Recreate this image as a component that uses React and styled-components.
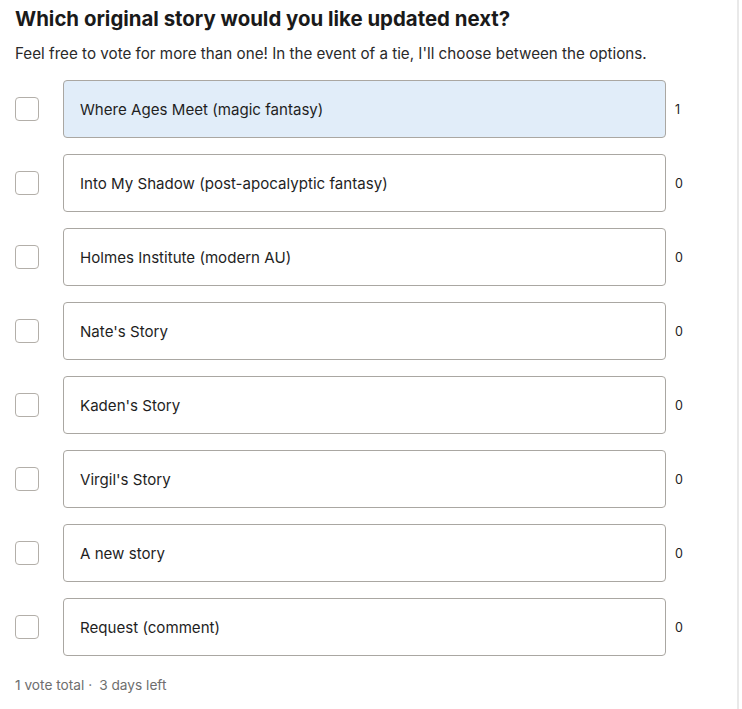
import React from 'react'
import styled, { createGlobalStyle } from 'styled-components'

//Base page styles
const GlobalStyle = createGlobalStyle`
  html, body {
    margin: 0;
    padding: 0;
    background: #ffffff;
  }
  body {
    font-family: Inter, "Noto Sans", "Liberation Sans", sans-serif;
    color: #1f1f1f;
  }
`

const Page = styled.div`
  box-sizing: border-box;
  width: 739px;
  min-height: 100vh;
  padding: 6px 0 0 15px;
  border-right: 2px solid #e9e9e9;
`

const Title = styled.h2`
  margin: 0;
  font-size: 20.4px;
  line-height: 26px;
  font-weight: 700;
  color: #1a1a1a;
`

const Subtitle = styled.p`
  margin: 11px 0 0;
  font-size: 15.2px;
  line-height: 22px;
  color: #2a2a2a;
`

const Options = styled.ul`
  list-style: none;
  margin: 15px 0 0;
  padding: 0;
  display: flex;
  flex-direction: column;
  gap: 16px;
`

const Row = styled.li`
  display: flex;
  align-items: center;
`

const Check = styled.span`
  box-sizing: border-box;
  width: 24px;
  height: 24px;
  border: 1px solid #b3afa9;
  border-radius: 4px;
  flex-shrink: 0;
`

const Choice = styled.div`
  box-sizing: border-box;
  margin-left: 24px;
  width: 603px;
  height: 58px;
  display: flex;
  align-items: center;
  padding: 0 16px;
  border: 1px solid #aaa7a2;
  border-radius: 4px;
  background: ${p => (p.$voted ? '#e1edf9' : '#ffffff')};
  font-size: 15.1px;
  color: #1f1f1f;
`

const Count = styled.span`
  margin-left: 9px;
  font-size: 12.5px;
  color: #222;
`

const Footer = styled.div`
  margin-top: 21px;
  font-size: 13.7px;
  color: #6e6e6e;
  display: flex;
  gap: 7px;
`

const options = [
  { label: 'Where Ages Meet (magic fantasy)', votes: 1 },
  { label: 'Into My Shadow (post-apocalyptic fantasy)', votes: 0 },
  { label: 'Holmes Institute (modern AU)', votes: 0 },
  { label: "Nate's Story", votes: 0 },
  { label: "Kaden's Story", votes: 0 },
  { label: "Virgil's Story", votes: 0 },
  { label: 'A new story', votes: 0 },
  { label: 'Request (comment)', votes: 0 },
]

function App() {
  return (
    <React.Fragment>
      <GlobalStyle />
      <Page>
        <Title>Which original story would you like updated next?</Title>
        <Subtitle>
          Feel free to vote for more than one! In the event of a tie, I'll choose between the options.
        </Subtitle>
        <Options>
          {options.map(o => (
            <Row key={o.label}>
              <Check />
              <Choice $voted={o.votes > 0}>{o.label}</Choice>
              <Count>{o.votes}</Count>
            </Row>
          ))}
        </Options>
        <Footer>
          <span>1 vote total ·</span>
          <span>3 days left</span>
        </Footer>
      </Page>
    </React.Fragment>
  )
}

export default App
